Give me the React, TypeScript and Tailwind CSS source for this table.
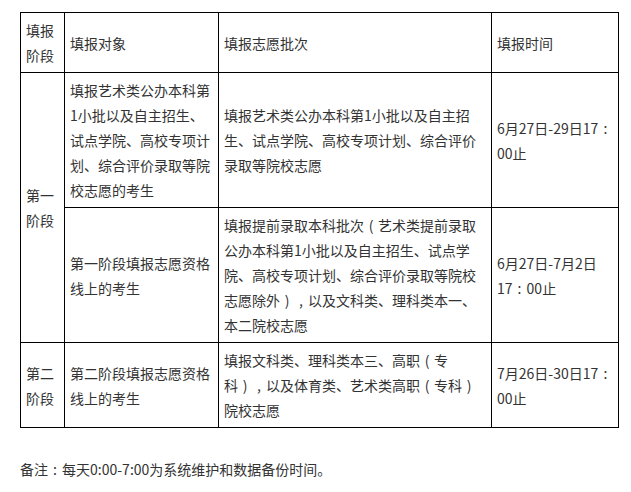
const font = { fontFamily: '"Microsoft YaHei", "Noto Sans CJK SC", sans-serif' };

// full-width punctuation drawn centred in its em box, as the reference font does
const centred: Record<string, string> = { "（": "(", "）": ")", "，": ",", "：": ":" };

const Line = ({ text }: { text: string }) => (
  <div className="whitespace-nowrap leading-[25px]">
    {Array.from(text).map((ch, i) =>
      centred[ch] ? (
        <span key={i} className="inline-block w-[14px] text-center">
          {centred[ch]}
        </span>
      ) : (
        ch
      )
    )}
  </div>
);

type CellProps = { lines: string[]; rowSpan?: number };

const Cell = ({ lines, rowSpan }: CellProps) => (
  <td rowSpan={rowSpan} className="border border-black align-middle pl-[5px] pr-[4px] pt-[5px] pb-[4px]">
    {lines.map((l, i) => (
      <Line key={i} text={l} />
    ))}
  </td>
);

export default function App() {
  return (
    <div className="w-[631px] h-[492px] bg-white text-[14px] text-[#333]" style={font}>
      <div className="pt-[12px] pl-[20px]">
        <table className="table-fixed border-collapse w-[599px]">
          <colgroup>
            <col className="w-[44px]" />
            <col className="w-[154px]" />
            <col className="w-[273px]" />
            <col className="w-[127px]" />
          </colgroup>
          <tbody>
            <tr>
              <Cell lines={["填报", "阶段"]} />
              <Cell lines={["填报对象"]} />
              <Cell lines={["填报志愿批次"]} />
              <Cell lines={["填报时间"]} />
            </tr>
            <tr>
              <Cell rowSpan={2} lines={["第一", "阶段"]} />
              <Cell
                lines={[
                  "填报艺术类公办本科第",
                  "1小批以及自主招生、",
                  "试点学院、高校专项计",
                  "划、综合评价录取等院",
                  "校志愿的考生",
                ]}
              />
              <Cell
                lines={[
                  "填报艺术类公办本科第1小批以及自主招",
                  "生、试点学院、高校专项计划、综合评价",
                  "录取等院校志愿",
                ]}
              />
              <Cell lines={["6月27日-29日17：", "00止"]} />
            </tr>
            <tr>
              <Cell lines={["第一阶段填报志愿资格", "线上的考生"]} />
              <Cell
                lines={[
                  "填报提前录取本科批次（艺术类提前录取",
                  "公办本科第1小批以及自主招生、试点学",
                  "院、高校专项计划、综合评价录取等院校",
                  "志愿除外），以及文科类、理科类本一、",
                  "本二院校志愿",
                ]}
              />
              <Cell lines={["6月27日-7月2日", "17：00止"]} />
            </tr>
            <tr>
              <Cell lines={["第二", "阶段"]} />
              <Cell lines={["第二阶段填报志愿资格", "线上的考生"]} />
              <Cell
                lines={[
                  "填报文科类、理科类本三、高职（专",
                  "科），以及体育类、艺术类高职（专科）",
                  "院校志愿",
                ]}
              />
              <Cell lines={["7月26日-30日17：", "00止"]} />
            </tr>
          </tbody>
        </table>
        <div className="mt-[29px]">
          <Line text="备注：每天0:00-7:00为系统维护和数据备份时间。" />
        </div>
      </div>
    </div>
  );
}
